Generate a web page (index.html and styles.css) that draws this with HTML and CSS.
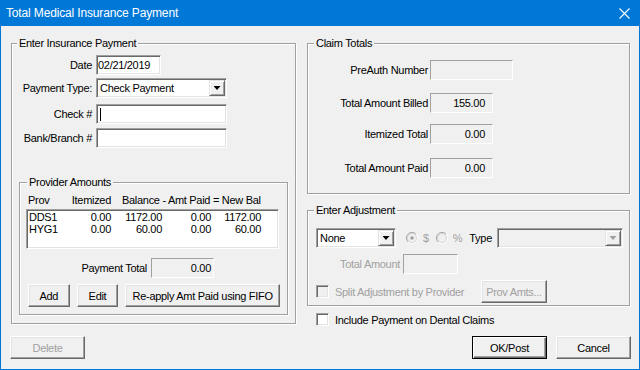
FILE: index.html
```html
<!DOCTYPE html>
<html lang="en">
<head>
  <meta charset="UTF-8">
  <title>Total Medical Insurance Payment</title>
  <link rel="stylesheet" href="styles.css">
</head>
<body>
  <div class="window">
    <div class="titlebar">
      <span class="title">Total Medical Insurance Payment</span>
      <svg class="close" width="11" height="11" viewBox="0 0 11 11"><path d="M0.5 0.5L10.5 10.5M10.5 0.5L0.5 10.5" stroke="#fff" stroke-width="1.1" fill="none"/></svg>
    </div>

    <div class="client">
      <div class="main">
        <!-- Left: payment entry -->
        <fieldset class="group group-payment">
          <legend>Enter Insurance Payment</legend>
          <div class="field row-date">
            <label>Date</label>
            <div class="edit edit-date">02/21/2019</div>
          </div>
          <div class="field row-type">
            <label>Payment Type:</label>
            <div class="combo combo-type">
              <span class="combo-text">Check Payment</span>
              <span class="combo-btn"><i class="arrow"></i></span>
            </div>
          </div>
          <div class="field row-check">
            <label>Check #</label>
            <div class="edit edit-wide"><span class="caret"></span></div>
          </div>
          <div class="field row-bank">
            <label>Bank/Branch #</label>
            <div class="edit edit-wide"></div>
          </div>

          <fieldset class="group group-prov">
            <legend>Provider Amounts</legend>
            <div class="list-head">
              <span>Prov</span>
              <span class="num">Itemized</span>
              <span class="head-bal">Balance - Amt Paid = New Bal</span>
            </div>
            <div class="list">
              <div class="list-row">
                <span class="prov">DDS1</span>
                <span class="num">0.00</span>
                <span class="num">1172.00</span>
                <span class="num">0.00</span>
                <span class="num">1172.00</span>
              </div>
              <div class="list-row">
                <span class="prov">HYG1</span>
                <span class="num">0.00</span>
                <span class="num">60.00</span>
                <span class="num">0.00</span>
                <span class="num">60.00</span>
              </div>
            </div>
            <div class="field row-total">
              <label>Payment Total</label>
              <div class="static static-total">0.00</div>
            </div>
            <div class="prov-buttons">
              <button class="btn btn-small">Add</button>
              <button class="btn btn-small">Edit</button>
              <button class="btn btn-fifo">Re-apply Amt Paid using FIFO</button>
            </div>
          </fieldset>
        </fieldset>

        <!-- Right: totals and adjustment -->
        <div class="side">
          <fieldset class="group group-claim">
            <legend>Claim Totals</legend>
            <div class="field claim-row row-preauth">
              <label>PreAuth Number</label>
              <div class="static static-preauth"></div>
            </div>
            <div class="field claim-row row-billed">
              <label>Total Amount Billed</label>
              <div class="static static-amount">155.00</div>
            </div>
            <div class="field claim-row row-itemized">
              <label>Itemized Total</label>
              <div class="static static-amount">0.00</div>
            </div>
            <div class="field claim-row row-paid">
              <label>Total Amount Paid</label>
              <div class="static static-amount">0.00</div>
            </div>
          </fieldset>

          <fieldset class="group group-adjust">
            <legend>Enter Adjustment</legend>
            <div class="adjust-row">
              <div class="combo combo-none">
                <span class="combo-text">None</span>
                <span class="combo-btn"><i class="arrow"></i></span>
              </div>
              <svg class="radio radio-first" width="12" height="12" viewBox="0 0 12 12">
                <path d="M2.1 9.9A5.5 5.5 0 0 1 9.9 2.1" stroke="#a0a0a0" fill="none"/>
                <path d="M9.9 2.1A5.5 5.5 0 0 1 2.1 9.9" stroke="#fff" fill="none"/>
                <circle cx="6" cy="6" r="4.5" fill="#f0f0f0" stroke="#d4d4d4"/>
                <circle cx="6" cy="6" r="1.8" fill="#a0a0a0"/>
              </svg>
              <span class="disabled sym-dollar">$</span>
              <svg class="radio radio-second" width="12" height="12" viewBox="0 0 12 12">
                <path d="M2.1 9.9A5.5 5.5 0 0 1 9.9 2.1" stroke="#a0a0a0" fill="none"/>
                <path d="M9.9 2.1A5.5 5.5 0 0 1 2.1 9.9" stroke="#fff" fill="none"/>
                <circle cx="6" cy="6" r="4.5" fill="#f0f0f0" stroke="#d4d4d4"/>
              </svg>
              <span class="disabled sym-pct">%</span>
              <span class="type-label">Type</span>
              <div class="combo combo-adjtype combo-disabled">
                <span class="combo-text"></span>
                <span class="combo-btn"><i class="arrow"></i></span>
              </div>
            </div>
            <div class="field row-adjamt">
              <label class="disabled">Total Amount</label>
              <div class="static static-adjamt"></div>
            </div>
            <div class="split-row">
              <div class="check-wrap">
                <span class="checkbox checkbox-disabled"></span>
                <span class="disabled">Split Adjustment by Provider</span>
              </div>
              <button class="btn btn-provamts" disabled>Prov Amts...</button>
            </div>
          </fieldset>

          <div class="include-row">
            <span class="checkbox"></span>
            <span>Include Payment on Dental Claims</span>
          </div>
        </div>
      </div>

      <div class="footer">
        <button class="btn btn-dialog" disabled>Delete</button>
        <div class="footer-right">
          <button class="btn btn-dialog btn-default">OK/Post</button>
          <button class="btn btn-dialog">Cancel</button>
        </div>
      </div>
    </div>
  </div>
</body>
</html>
```

FILE: styles.css
```css
* {
  box-sizing: border-box;
}

body {
  margin: 0;
  font-family: "Liberation Sans", Arial, sans-serif;
  font-size: 11px;
  letter-spacing: -0.3px;
  color: #000;
  background-color: #f0f0f0;
}

.window {
  width: 640px;
  height: 370px;
  display: flex;
  flex-direction: column;
  border: 1px solid #0078d7;
  border-top: none;
  background-color: #f0f0f0;
}

.titlebar {
  height: 26px;
  display: flex;
  align-items: center;
  justify-content: space-between;
  padding: 0 9px 0 5px;
  background-color: #0078d7;
}

.title {
  color: #fff;
  font-size: 12px;
  letter-spacing: -0.15px;
}

.client {
  flex: 1;
  display: flex;
  flex-direction: column;
  padding: 11px 9px 10px 10px;
}

.main {
  display: flex;
  align-items: flex-start;
  gap: 11px;
}

/* Group boxes */
.group {
  margin: 0;
  padding: 0;
  min-width: 0;
  border: 1px solid #a0a0a0;
  box-shadow: inset 1px 1px #fff, 1px 1px #fff;
}

.group legend {
  padding: 0 2px;
  line-height: 13px;
  background-color: #f0f0f0;
}

.group-payment {
  width: 285px;
  height: 287px;
  padding: 0 7px;
}

.group-payment > legend {
  margin-left: -2px;
}

.group-prov {
  width: 269px;
  height: 139px;
  margin-top: 28px;
  padding: 0 7px 0 6px;
}

.group-prov > legend {
  margin-left: 1px;
}

.side {
  width: 323px;
  display: flex;
  flex-direction: column;
}

.group-claim {
  height: 157px;
}

.group-claim > legend {
  margin-left: 6px;
}

.group-adjust {
  height: 102px;
  margin-top: 10px;
  padding: 0 6px 0 8px;
}

.group-adjust > legend {
  margin-left: -2px;
}

/* Label + control rows */
.field {
  display: flex;
  align-items: center;
  gap: 4px;
  height: 20px;
}

.field label {
  width: 73px;
  text-align: right;
  white-space: nowrap;
}

.row-date { margin-top: 5px; }
.row-type { margin-top: 3px; }
.row-check { margin-top: 6px; }
.row-bank { margin-top: 4px; }

.claim-row {
  gap: 2px;
}

.claim-row label {
  width: 120px;
}

.row-preauth { margin-top: 10px; }
.row-billed { margin-top: 13px; }
.row-itemized { margin-top: 11px; }
.row-paid { margin-top: 14px; }

/* Controls */
.edit {
  height: 20px;
  display: flex;
  align-items: center;
  padding-left: 1px;
  background-color: #fff;
  border: 1px solid;
  border-color: #a0a0a0 #fff #fff #a0a0a0;
  box-shadow: inset 1px 1px #696969, inset -1px -1px #e3e3e3;
  white-space: nowrap;
}

.edit-date {
  width: 65px;
}

.edit-wide {
  width: 131px;
}

.caret {
  width: 1px;
  height: 13px;
  margin-left: 2px;
  background-color: #000;
}

.static {
  height: 20px;
  line-height: 18px;
  text-align: right;
  border: 1px solid;
  border-color: #a0a0a0 #fff #fff #a0a0a0;
}

.static-preauth {
  width: 83px;
}

.static-amount {
  width: 63px;
  padding-right: 7px;
}

.combo {
  height: 20px;
  display: flex;
  align-items: center;
  padding: 1px;
  background-color: #fff;
  border: 1px solid;
  border-color: #a0a0a0 #fff #fff #a0a0a0;
  box-shadow: inset 1px 1px #696969, inset -1px -1px #e3e3e3;
}

.combo-text {
  flex: 1;
  padding-left: 2px;
  white-space: nowrap;
}

.combo-btn {
  width: 16px;
  height: 16px;
  display: flex;
  align-items: center;
  justify-content: center;
  background-color: #f0f0f0;
  border: 1px solid;
  border-color: #e3e3e3 #696969 #696969 #e3e3e3;
  box-shadow: inset 1px 1px #fff, inset -1px -1px #a0a0a0;
}

.arrow {
  width: 7px;
  height: 4px;
  background-color: #000;
  clip-path: polygon(0 0, 100% 0, 50% 100%);
}

.combo-type {
  width: 131px;
}

.combo-none {
  width: 80px;
}

.combo-adjtype {
  width: 126px;
  margin-left: auto;
}

.combo-disabled {
  background-color: #f0f0f0;
}

.combo-disabled .arrow {
  background-color: #a0a0a0;
}

/* Provider list */
.list-head {
  display: grid;
  grid-template-columns: 42px 41px 51px 49px 50px;
  margin-top: 5px;
  padding-left: 2px;
  line-height: 13px;
  white-space: nowrap;
}

.head-bal {
  grid-column: 3 / span 3;
  padding-left: 11px;
}

.num {
  text-align: right;
}

.list {
  width: 253px;
  height: 40px;
  margin-top: 2px;
  padding: 1px;
  background-color: #fff;
  border: 1px solid;
  border-color: #a0a0a0 #fff #fff #a0a0a0;
  box-shadow: inset 1px 1px #696969, inset -1px -1px #e3e3e3;
}

.list-row {
  display: grid;
  grid-template-columns: 42px 41px 51px 49px 50px;
  line-height: 12px;
}

.prov {
  padding-left: 1px;
}

.row-total {
  margin-top: 9px;
}

.row-total label {
  width: 121px;
}

.static-total {
  width: 63px;
  padding-right: 2px;
}

.prov-buttons {
  display: flex;
  gap: 7px;
  margin-top: 6px;
  padding-left: 2px;
}

/* Buttons */
.btn {
  height: 23px;
  padding: 0;
  font-family: inherit;
  font-size: 11px;
  letter-spacing: inherit;
  color: #000;
  background-color: #f0f0f0;
  border: 1px solid;
  border-color: #fff #696969 #696969 #fff;
  box-shadow: inset -1px -1px #a0a0a0, inset 1px 1px #e3e3e3;
}

.btn:disabled {
  color: #a0a0a0;
}

.btn-small {
  width: 42px;
}

.btn-fifo {
  width: 156px;
}

.btn-default {
  border-color: #000;
  box-shadow: inset 1px 1px #fff, inset -1px -1px #696969, inset -2px -2px #a0a0a0;
}

.btn-dialog {
  width: 75px;
}

/* Adjustment group */
.adjust-row {
  display: flex;
  align-items: center;
  height: 20px;
  margin-top: 11px;
}

.radio-first {
  margin-left: 10px;
}

.sym-dollar {
  margin-left: 5px;
}

.radio-second {
  margin-left: 7px;
}

.sym-pct {
  margin-left: 5px;
}

.type-label {
  margin-left: 7px;
}

.disabled {
  color: #a0a0a0;
}

.row-adjamt {
  margin-top: 6px;
  gap: 3px;
}

.row-adjamt label {
  width: 84px;
}

.static-adjamt {
  width: 55px;
}

.split-row {
  display: flex;
  align-items: center;
  height: 23px;
  margin-top: 6px;
}

.check-wrap {
  width: 165px;
  display: flex;
  align-items: center;
  gap: 6px;
  white-space: nowrap;
}

.btn-provamts {
  width: 66px;
}

.checkbox {
  width: 13px;
  height: 13px;
  flex: none;
  background-color: #fff;
  border: 1px solid;
  border-color: #a0a0a0 #fff #fff #a0a0a0;
  box-shadow: inset 1px 1px #696969, inset -1px -1px #e3e3e3;
}

.checkbox-disabled {
  background-color: #f0f0f0;
}

.include-row {
  display: flex;
  align-items: center;
  gap: 6px;
  height: 13px;
  margin-top: 7px;
  padding-left: 9px;
}

/* Footer */
.footer {
  margin-top: auto;
  margin-left: -1px;
  margin-right: -1px;
  display: flex;
  justify-content: space-between;
}

.footer-right {
  display: flex;
  gap: 9px;
}
```
